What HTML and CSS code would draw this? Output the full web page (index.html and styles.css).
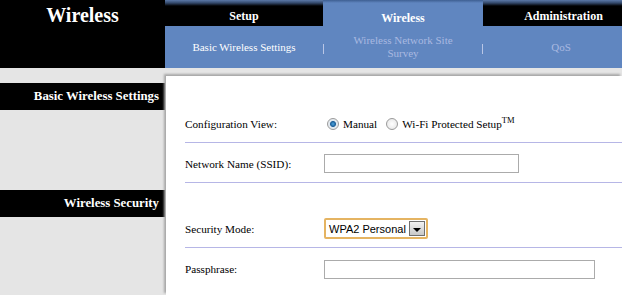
FILE: index.html
```html
<!DOCTYPE html>
<html lang="en">
<head>
<meta charset="UTF-8">
<title>Wireless</title>
<link rel="stylesheet" href="styles.css">
</head>
<body>
<div class="page">
    <div class="top">
        <div class="brand">Wireless</div>
        <div class="nav">
            <div class="tabs">
                <div class="tab">Setup</div>
                <div class="tab tab-on">Wireless</div>
                <div class="tab tab-last">Administration</div>
            </div>
            <div class="subtabs">
                <div class="sub sub-on">Basic Wireless Settings</div>
                <div class="sep"></div>
                <div class="sub">Wireless Network Site<br>Survey</div>
                <div class="sep"></div>
                <div class="sub sub-last">QoS</div>
            </div>
        </div>
    </div>

    <div class="main">
        <div class="side">
            <div class="side-head">Basic Wireless Settings</div>
            <div class="side-head side-head2">Wireless Security</div>
        </div>
        <div class="content">
            <div class="row">
                <div class="label">Configuration View:</div>
                <div class="field">
                    <span class="radio radio-on"></span><span class="opt">Manual</span>
                    <span class="radio"></span><span class="opt">Wi-Fi Protected Setup<sup>TM</sup></span>
                </div>
            </div>
            <div class="row">
                <div class="label">Network Name (SSID):</div>
                <div class="field"><div class="text ssid"></div></div>
            </div>
            <div class="gap"></div>
            <div class="row">
                <div class="label">Security Mode:</div>
                <div class="field">
                    <div class="select">
                        <span class="select-text">WPA2 Personal</span>
                        <span class="select-btn"><span class="arrow"></span></span>
                    </div>
                </div>
            </div>
            <div class="row row-last">
                <div class="label">Passphrase:</div>
                <div class="field"><div class="text pass"></div></div>
            </div>
        </div>
    </div>
</div>
</body>
</html>
```

FILE: styles.css
```css
body{
    margin: 0;
    background: #e5e5e5;
    font-family: "Liberation Serif", "Times New Roman", serif;
    overflow: hidden;
}
.page{
    width: 622px;
    height: 295px;
    overflow: hidden;
    display: flex;
    flex-direction: column;
}
.top{
    display: flex;
    height: 68px;
    flex-shrink: 0;
}
.brand{
    width: 165px;
    flex-shrink: 0;
    background: #000;
    color: #fff;
    font-size: 20px;
    font-weight: bold;
    text-align: center;
    padding-top: 4px;
    box-sizing: border-box;
}
.nav{
    flex: 1;
    display: flex;
    flex-direction: column;
    min-width: 0;
}
.tabs{
    display: flex;
    height: 26px;
}
.tab{
    width: 158px;
    flex-shrink: 0;
    background: linear-gradient(#5b79a8 0px, #33486a 3px, #000 6px);
    color: #fff;
    font-size: 12px;
    font-weight: bold;
    text-align: center;
    padding-top: 9px;
    box-sizing: border-box;
}
.tab-on{
    width: 160px;
    background: linear-gradient(#3e5f92 0px, #6086c0 3px);
    padding-top: 11px;
}
.tab-last{
    width: 139px;
    padding-left: 22px;
}
.subtabs{
    display: flex;
    align-items: center;
    height: 42px;
    background: #6086c0;
}
.sub{
    width: 158px;
    flex-shrink: 0;
    text-align: center;
    font-size: 11px;
    line-height: 13px;
    color: #a9b9e0;
}
.sub-on{
    color: #fff;
}
.sub-last{
    width: 138px;
    padding-left: 18px;
    box-sizing: border-box;
}
.sep{
    width: 1px;
    flex-shrink: 0;
    background: #b9c6e6;
    height: 10px;
    margin-top: 3px;
}
.main{
    display: flex;
    flex: 1;
}
.side{
    width: 165px;
    flex-shrink: 0;
    padding-top: 15px;
}
.side-head{
    height: 27px;
    background: #000;
    color: #fff;
    font-size: 12.8px;
    font-weight: bold;
    text-align: right;
    padding-right: 6px;
    line-height: 26px;
}
.side-head2{
    margin-top: 80px;
}
.content{
    flex: 1;
    margin-top: 8px;
    margin-left: 1px;
    background: #fff;
    padding-top: 27px;
    box-shadow: -2px -2px 2px #a8a8a8;
}
.row{
    display: flex;
    align-items: center;
    border-bottom: 1px solid #b6b6e6;
    margin-left: 19px;
    padding-top: 2px;
    box-sizing: border-box;
    height: 40px;
}
.row-last{
    border-bottom: none;
}
.gap{
    height: 25px;
}
.label{
    width: 139px;
    flex-shrink: 0;
    font-size: 11.2px;
    color: #000;
}
.field{
    display: flex;
    align-items: center;
    font-size: 11.2px;
}
.radio{
    width: 12px;
    height: 12px;
    border-radius: 50%;
    border: 1px solid #9a9a9a;
    box-sizing: border-box;
    margin-left: 3px;
    margin-right: 4px;
    background: radial-gradient(circle, #fff 0, #e2e2e2 100%);
}
.radio-on{
    background: radial-gradient(circle, #4da6e0 0, #1d5f99 2.5px, #dfe7ee 3.5px, #f6f6f6 100%);
}
.opt{
    margin-right: 6px;
}
sup{
    font-size: 8.5px;
    line-height: 0;
}
.text{
    height: 19px;
    border: 1px solid #ababab;
    box-sizing: border-box;
    background: #fff;
}
.ssid{
    width: 195px;
}
.pass{
    width: 271px;
}
.select{
    display: flex;
    align-items: center;
    width: 104px;
    height: 21px;
    border: 2px solid #e5b462;
    border-radius: 2px;
    box-sizing: border-box;
    background: #fff;
}
.select-text{
    flex: 1;
    white-space: nowrap;
    font-family: "Liberation Sans", Arial, sans-serif;
    font-size: 11px;
    padding-left: 3px;
    color: #000;
}
.select-btn{
    width: 16px;
    height: 15px;
    margin-right: 1px;
    flex-shrink: 0;
    border: 1px solid #707070;
    box-sizing: border-box;
    background: linear-gradient(#f2f2f2, #c8c8c8);
    display: flex;
    align-items: center;
    justify-content: center;
}
.arrow{
    width: 0;
    height: 0;
    border-left: 4px solid transparent;
    border-right: 4px solid transparent;
    border-top: 4px solid #000;
    margin-top: 2px;
}
```
